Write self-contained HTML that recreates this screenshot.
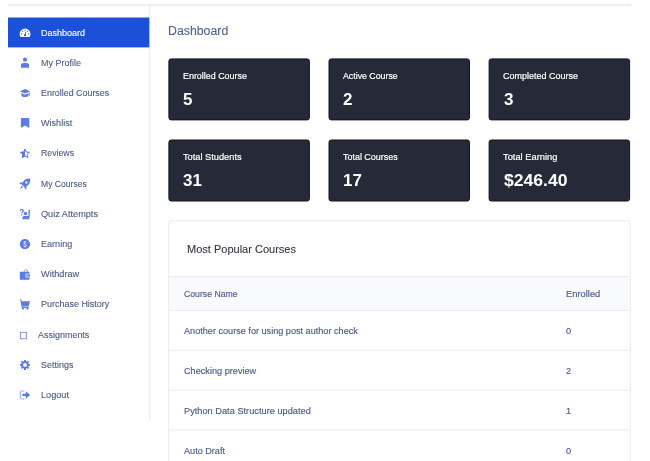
<!DOCTYPE html>
<html>
<head>
<meta charset="utf-8">
<title>Dashboard</title>
<style>
*{box-sizing:border-box;margin:0;padding:0}
html,body{width:650px;height:461px;overflow:hidden;background:#fff}
body{font-family:"Liberation Sans",sans-serif;position:relative;color:#4b5981;will-change:transform}
.bg{position:absolute;left:0;top:0;display:block}
.t{position:absolute;white-space:nowrap;transform-origin:0 50%}
.m{font-size:9.750px;line-height:12px;color:#4f5b84;-webkit-text-stroke:.12px currentColor}
.m.w{color:#fff}
.h{font-size:12.500px;line-height:18px;color:#525f90;-webkit-text-stroke:.1px #525f90}
.l{font-size:9.750px;line-height:12px;color:#fff;-webkit-text-stroke:.2px #fff}
.n{font-size:16.500px;line-height:20px;font-weight:bold;color:#fff}
.tt{font-size:11.500px;line-height:14px;color:#32333f;-webkit-text-stroke:.1px #32333f}
.c{font-size:9.750px;line-height:12px;color:#4d5a89;-webkit-text-stroke:.15px #4d5a89}
</style>
</head>
<body>
<svg class="bg" width="650" height="461" viewBox="0 0 650 461">
<rect x="8" y="4.300" width="623.200" height="1.400" fill="#e9e9ea"/>
<rect x="149.300" y="5" width="1" height="416" fill="#e8e8eb"/>
<rect x="8" y="17.500" width="141.300" height="29.900" fill="#1b51d9"/>
<rect x="168.9" y="58.9" width="140.5" height="61.0" rx="2.200" fill="#262a38" stroke="#13151e" stroke-width="1"/>
<rect x="329.0" y="58.9" width="140.5" height="61.0" rx="2.200" fill="#262a38" stroke="#13151e" stroke-width="1"/>
<rect x="489.1" y="58.9" width="140.5" height="61.0" rx="2.200" fill="#262a38" stroke="#13151e" stroke-width="1"/>
<rect x="168.9" y="140.0" width="140.5" height="61.0" rx="2.200" fill="#262a38" stroke="#13151e" stroke-width="1"/>
<rect x="329.0" y="140.0" width="140.5" height="61.0" rx="2.200" fill="#262a38" stroke="#13151e" stroke-width="1"/>
<rect x="489.1" y="140.0" width="140.5" height="61.0" rx="2.200" fill="#262a38" stroke="#13151e" stroke-width="1"/>
<rect x="168.400" y="220.700" width="461.800" height="250" rx="3" fill="#fff" stroke="#ebebee" stroke-width="1"/>
<rect x="168.900" y="276.700" width="460.800" height="33.700" fill="#f9fafc"/>
<rect x="168.900" y="276.20" width="460.800" height="1" fill="#e9eaf0"/>
<rect x="168.900" y="309.90" width="460.800" height="1" fill="#e9eaf0"/>
<rect x="168.900" y="349.80" width="460.800" height="1" fill="#e9eaf0"/>
<rect x="168.900" y="389.60" width="460.800" height="1" fill="#e9eaf0"/>
<rect x="168.900" y="429.45" width="460.800" height="1" fill="#e9eaf0"/>
<g transform="translate(15 22)" fill="#5a7de4"><path fill="#fff" d="M4.600 12A5.450 5.450 0 0 1 15.500 12c0 1-.3 2-.8 2.700q-.2.3-.6.3H6q-.4 0-.6-.3C4.900 14 4.600 13 4.600 12z"/><g fill="#1b51d9"><circle cx="10" cy="8.200" r=".55"/><circle cx="7.600" cy="9.300" r=".55"/><circle cx="12.450" cy="9.300" r=".55"/><circle cx="6.500" cy="11.900" r=".55"/><circle cx="13.550" cy="11.900" r=".55"/><circle cx="10" cy="13.200" r="1.050"/><path d="M10.450 9.900l.85.3-.9 3.100-.85-.25z"/></g></g>
<g transform="translate(15 52)" fill="#5a7de4"><circle cx="10" cy="7.700" r="2.100"/><path d="M5.900 14.900v-1.200a2.600 2.600 0 0 1 2.600-2.600h3a2.600 2.600 0 0 1 2.600 2.600v1.200a.9.900 0 0 1-.9.900H6.800a.9.900 0 0 1-.9-.9z"/></g>
<g transform="translate(15 82)" fill="#5a7de4"><path d="M10 6.900 15.100 9.250 10 11.600 4.800 9.250z"/><path d="M6.400 11v2.200c0 1 1.600 1.800 3.600 1.800s3.600-.8 3.600-1.800V11L10 12.700z"/><path d="M14.400 9.600h.6v4.600h-.6z"/></g>
<g transform="translate(15 113)" fill="#5a7de4"><path d="M5.900 5.700a.7.700 0 0 1 .7-.7h7a.7.700 0 0 1 .7.700V15l-4.200-2.500L5.900 15z"/></g>
<g transform="translate(15 143)" fill="#5a7de4"><path d="M10.00 6.00 L11.29 9.02 L14.57 9.32 L12.09 11.48 L12.82 14.68 L10.00 13.00 L7.18 14.68 L7.91 11.48 L5.43 9.32 L8.71 9.02z" fill="none" stroke="#5a7de4" stroke-width="1" stroke-linejoin="round"/><clipPath id="sh"><rect x="0" y="0" width="10" height="20"/></clipPath><path clip-path="url(#sh)" d="M10.00 5.60 L11.47 8.78 L14.95 9.19 L12.38 11.57 L13.06 15.01 L10.00 13.30 L6.94 15.01 L7.62 11.57 L5.05 9.19 L8.53 8.78z"/></g>
<g transform="translate(15 173)" fill="#5a7de4"><g transform="translate(11.400 9.500) rotate(45)"><path d="M0-5.300C2.200-3.800 3.100-1.500 3 .5C3 2 2.600 3.500 2.200 4.700H-2.200C-2.600 3.500-3 2-3 .5C-3.100-1.500-2.200-3.800 0-5.300z"/><path d="M-2.900 2.600-4.300 4.300V5.900L-2.200 4.900zM2.900 2.600 4.300 4.300V5.900L2.200 4.900z"/><path d="M-1.100 5.700 0 8.700 1.100 5.700z" fill="#6a76b8"/><circle cx="0" cy="0" r="1.150" fill="#fff"/></g></g>
<g transform="translate(15 203)" fill="#5a7de4"><path d="M5.400 7.700C5.400 5.900 8.300 5.900 8.300 7.700C8.300 8.900 6.800 8.800 6.800 10.200" fill="none" stroke="#6a7fe0" stroke-width="1.300"/><circle cx="6.800" cy="11.700" r=".7"/><circle cx="10.400" cy="10.400" r="1.750"/><path d="M7.400 16.300v-1.500a1.800 1.800 0 0 1 1.800-1.800h4.200l.1-6.200h1.450l-.3 7.200-.75 2.300z"/></g>
<g transform="translate(15 234)" fill="#5a7de4"><circle cx="9.900" cy="10.200" r="5.100"/><path d="M11.300 8.700C10.900 7.700 8.800 7.700 8.800 9C8.800 10.300 11.200 10.100 11.200 11.500C11.200 12.800 9 12.800 8.500 11.700M10 7v.8M10 12.500v.8" fill="none" stroke="#fff" stroke-width=".95"/></g>
<g transform="translate(15 264)" fill="#5a7de4"><path d="M9.200 7.900C9.200 6.400 9.900 5.800 10.850 5.800S12.500 6.400 12.500 7.900" fill="none" stroke="#86a0ee" stroke-width="1"/><path d="M4.800 8.400a.6.600 0 0 1 .6-.6h8.500a.6.600 0 0 1 .6.600V15.200a.6.600 0 0 1-.6.600H5.400a.6.600 0 0 1-.6-.6z"/><path d="M9.800 11.600a2.300 2.300 0 0 1 2.300-2.300h2.900v4.600h-2.900a2.300 2.300 0 0 1-2.300-2.300z" fill="#a8bcf4"/><path d="M12.400 11h2.600v1.100h-2.600z"/></g>
<g transform="translate(15 294)" fill="#5a7de4"><path d="M4.800 5.400h1.500l.5 1.800h8.200l-1.100 4.600a.8.800 0 0 1-.8.600H7.300l.2.700h6.300v.9H6.700L5.500 6.300H4.800z"/><circle cx="8" cy="14.600" r="1.050"/><circle cx="12.400" cy="14.600" r="1.050"/></g>
<g transform="translate(15 324)" fill="#5a7de4"><rect x="5.450" y="8.350" width="6" height="6.400" fill="none" stroke="#7e8ad6" stroke-width=".9"/></g>
<g transform="translate(15 355)" fill="#5a7de4"><path fill-rule="evenodd" d="M9.01 6.33 L9.04 4.89 L10.96 4.89 L10.99 6.33 L11.82 6.68 L12.86 5.68 L14.22 7.04 L13.22 8.08 L13.57 8.91 L15.01 8.94 L15.01 10.86 L13.57 10.89 L13.22 11.72 L14.22 12.76 L12.86 14.12 L11.82 13.12 L10.99 13.47 L10.96 14.91 L9.04 14.91 L9.01 13.47 L8.18 13.12 L7.14 14.12 L5.78 12.76 L6.78 11.72 L6.43 10.89 L4.99 10.86 L4.99 8.94 L6.43 8.91 L6.78 8.08 L5.78 7.04 L7.14 5.68 L8.18 6.68z M11.900 9.900a1.900 1.900 0 1 0-3.800 0a1.900 1.900 0 1 0 3.800 0z"/></g>
<g transform="translate(15 385)" fill="#5a7de4"><path d="M8.900 6.050H6.300a.9.900 0 0 0-.9.900v6.200a.9.900 0 0 0 .9.900h2.600" fill="none" stroke="#8aa0ee" stroke-width=".9"/><path d="M7.400 8.700h3.400V6.200L15.200 9.900 10.800 13.700V11.100H7.400z"/></g>
</svg>
<div class="t m w" style="left:41.3px;top:27px;transform:scaleX(0.92);">Dashboard</div>
<div class="t m" style="left:41.3px;top:57px;transform:scaleX(0.92);">My Profile</div>
<div class="t m" style="left:41.3px;top:87px;transform:scaleX(0.912);">Enrolled Courses</div>
<div class="t m" style="left:41.3px;top:117px;transform:scaleX(0.929);">Wishlist</div>
<div class="t m" style="left:41.3px;top:147px;transform:scaleX(0.896);">Reviews</div>
<div class="t m" style="left:41.3px;top:178px;transform:scaleX(0.88);">My Courses</div>
<div class="t m" style="left:41.3px;top:208px;transform:scaleX(0.939);">Quiz Attempts</div>
<div class="t m" style="left:41.3px;top:238px;transform:scaleX(0.929);">Earning</div>
<div class="t m" style="left:41.3px;top:268px;transform:scaleX(0.939);">Withdraw</div>
<div class="t m" style="left:41.3px;top:298px;transform:scaleX(0.92);">Purchase History</div>
<div class="t m" style="left:38.0px;top:329px;transform:scaleX(0.92);">Assignments</div>
<div class="t m" style="left:41.3px;top:359px;transform:scaleX(0.92);">Settings</div>
<div class="t m" style="left:41.3px;top:389px;transform:scaleX(0.937);">Logout</div>
<div class="t h" style="left:168.4px;top:21.5px;transform:scaleX(0.985);">Dashboard</div>
<div class="t l" style="left:183.4px;top:70px;transform:scaleX(0.914);">Enrolled Course</div>
<div class="t n" style="left:183.4px;top:88.8px;transform:scaleX(1.03);">5</div>
<div class="t l" style="left:343.0px;top:70px;transform:scaleX(0.901);">Active Course</div>
<div class="t n" style="left:343.1px;top:88.8px;transform:scaleX(1.03);">2</div>
<div class="t l" style="left:503.2px;top:70px;transform:scaleX(0.924);">Completed Course</div>
<div class="t n" style="left:503.6px;top:88.8px;transform:scaleX(1.03);">3</div>
<div class="t l" style="left:183.4px;top:151px;transform:scaleX(0.948);">Total Students</div>
<div class="t n" style="left:183.4px;top:169.9px;transform:scaleX(1.03);">31</div>
<div class="t l" style="left:343.1px;top:151px;transform:scaleX(0.916);">Total Courses</div>
<div class="t n" style="left:342.9px;top:169.9px;transform:scaleX(1.03);">17</div>
<div class="t l" style="left:503.2px;top:151px;transform:scaleX(0.955);">Total Earning</div>
<div class="t n" style="left:503.6px;top:169.9px;transform:scaleX(1.065);">$246.40</div>
<div class="t tt" style="left:187px;top:242.1px;transform:scaleX(0.958);">Most Popular Courses</div>
<div class="t c" style="left:184px;top:288px;transform:scaleX(0.892);">Course Name</div>
<div class="t c" style="left:566px;top:288px;transform:scaleX(0.959);">Enrolled</div>
<div class="t c" style="left:184px;top:325px;transform:scaleX(0.935);">Another course for using post author check</div>
<div class="t c" style="left:566px;top:325px;transform:scaleX(0.94);">0</div>
<div class="t c" style="left:184px;top:365px;transform:scaleX(0.938);">Checking preview</div>
<div class="t c" style="left:566px;top:365px;transform:scaleX(0.94);">2</div>
<div class="t c" style="left:184px;top:405px;transform:scaleX(0.947);">Python Data Structure updated</div>
<div class="t c" style="left:566px;top:405px;transform:scaleX(0.94);">1</div>
<div class="t c" style="left:184px;top:445px;transform:scaleX(0.934);">Auto Draft</div>
<div class="t c" style="left:566px;top:445px;transform:scaleX(0.94);">0</div>
</body>
</html>
